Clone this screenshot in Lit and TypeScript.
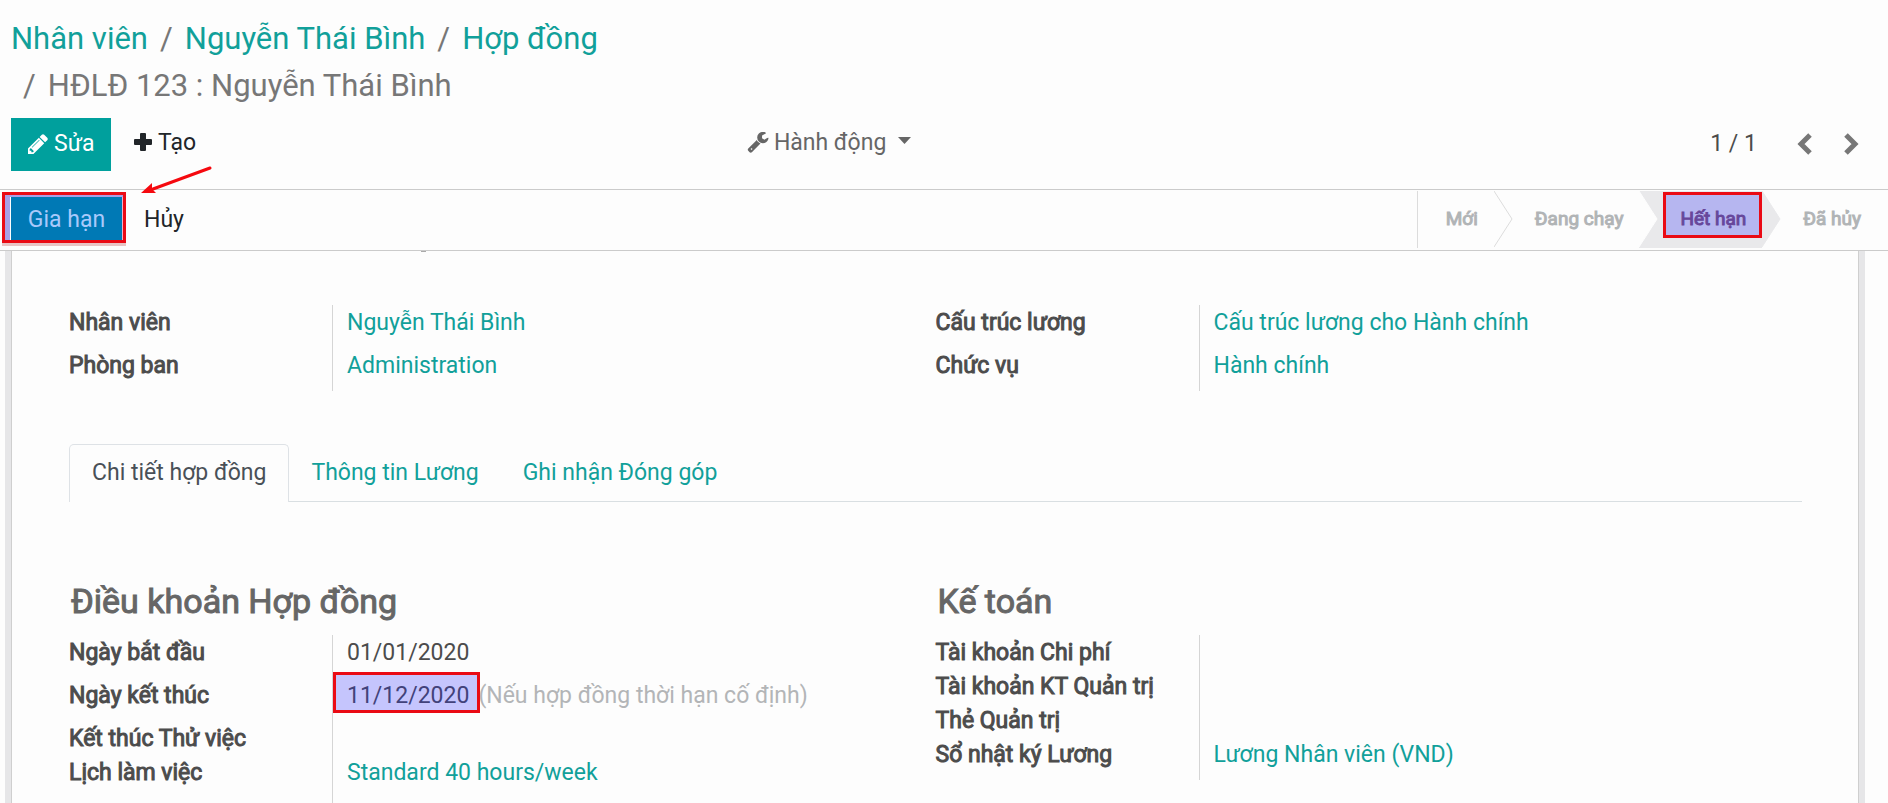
import { LitElement, html, css, nothing } from "lit";
import { customElement, property } from "lit/decorators.js";

type Field = { label: string; value?: string; link?: boolean; note?: string; marked?: boolean };

@customElement("field-group")
export class FieldGroup extends LitElement {
  @property({ attribute: false }) fields: Field[] = [];
  @property() heading = "";

  static styles = css`
    :host { display: flex; flex-direction: column; flex: 1 1 0; min-width: 0; }
    .heading {
      margin: 0 0 8px 2px; font-size: 34px; line-height: 52px; font-weight: 400;
      color: #666; -webkit-text-stroke: 1px #666;
    }
    .rows { margin: 0; }
    .row { display: flex; min-height: 34px; line-height: 32px; }
    .label { flex: 0 0 263px; padding-top: 2px; color: #4c4c4c; -webkit-text-stroke: 1px #4c4c4c; white-space: nowrap; }
    .value { flex: 1; margin: 0; padding: 2px 0 0 14px; border-left: 1px solid #d5d5d5; white-space: nowrap; }
    .filled { padding-bottom: 9px; }
    a { color: #11a09a; text-decoration: none; }
    .note { color: #b3b5b7; margin-left: 9px; }
    .date { position: relative; }
    .mark {
      position: absolute; left: -14px; right: -11px; top: -10px; bottom: -4px; box-sizing: border-box;
      border: 3px solid #ea0a14; background: rgba(40, 40, 255, 0.26);
    }
  `;

  render() {
    return html`
      ${this.heading ? html`<h2 class="heading">${this.heading}</h2>` : nothing}
      <dl class="rows">
        ${this.fields.map(
          (f) => html`<div class="row">
            <dt class="label">${f.label}</dt>
            <dd class="value ${f.value ? "filled" : ""}">${f.link
              ? html`<a href="#">${f.value}</a>`
              : html`<span class="date">${f.value ?? ""}${f.marked ? html`<i class="mark"></i>` : nothing}</span>`}${f.note
              ? html`<span class="note">${f.note}</span>`
              : nothing}</dd>
          </div>`
        )}
      </dl>
    `;
  }
}

@customElement("app-root")
export class AppRoot extends LitElement {
  static styles = css`
    :host {
      display: flex; flex-direction: column; height: 100vh; overflow: hidden; position: relative;
      background: #fdfdfd; color: #4c4c4c; font: 23px/34px Roboto, "Noto Sans", sans-serif;
    }
    * { box-sizing: border-box; }
    a { color: #11a09a; text-decoration: none; }
    button { font: inherit; border: 0; margin: 0; background: none; color: #212529; cursor: pointer; white-space: nowrap; }
    svg { display: block; flex: none; }
    .crumbs {
      display: flex; flex-wrap: wrap; list-style: none; margin: 0; padding: 15px 11px 0; width: 40%;
      font-size: 31px; line-height: 47px; color: #777;
    }
    .crumb + .crumb::before { content: "/"; padding: 0 12px; color: #777; }
    .tools { display: grid; grid-template-columns: 39.5% auto 1fr; align-items: start; padding: 9px 14px 18px 11px; }
    .left, .pager { display: flex; }
    .edit { background: #00a09d; color: #fff; width: 100px; height: 53px; display: flex; gap: 6px; padding: 9px 0 0 17px; }
    .edit svg { margin-top: 7px; }
    .create { display: flex; gap: 6px; padding: 8px 23px; }
    .create svg { margin-top: 7px; }
    .action { display: flex; gap: 5px; padding: 8px 0; color: #666; }
    .action svg { margin-top: 6px; }
    .action .caret { margin: 11px 0 0 7px; }
    .pager { justify-content: flex-end; padding-top: 9px; }
    .page { margin-right: 27px; }
    .step { padding: 4px 10px; }
    .status { display: flex; justify-content: space-between; height: 62px; border: solid #cbcbcb; border-width: 1px 0; position: relative; }
    .acts { display: flex; padding: 7px 0 0 11px; }
    .renew { background: #0079b5; color: #a9c9fb; height: 43px; width: 111px; padding: 2px 0 0; }
    .cancel { padding: 2px 22px 0; height: 43px; }
    .stages { display: flex; list-style: none; margin: 0; padding: 1px 0 2px; font-size: 19px; line-height: 56px; }
    .stage { position: relative; padding: 0 16px 0 41px; color: #b1b4b6; -webkit-text-stroke: 1px currentColor; white-space: nowrap; }
    .stage:first-child { padding-left: 28px; border-left: 1px solid #dcdcdc; }
    .stage:last-child { padding-right: 27px; }
    .current { background: #e9e9eb; color: #7e5378; }
    .point { position: absolute; left: 100%; top: 0; z-index: 1; }
    .mark { position: absolute; border: 3px solid #ea0a14; pointer-events: none; }
    .renewmark { left: 2px; top: 2px; width: 124px; height: 51px; box-shadow: inset 5px 0 #a9a0e6, inset 0 2px #a9a0e6, inset -1px 0 #f0b0c8, 0 3px #e8c4c4; }
    .stagemark { left: 24px; right: 0; top: 1px; height: 46px; background: rgba(40, 40, 255, 0.26); z-index: 2; }
    .arrow { position: absolute; left: 139px; top: 164px; z-index: 3; }
    .sheet { flex: 1; min-height: 0; overflow: hidden; margin: 0 23px 0 5px; padding: 54px 57px 0 58px; border: solid #e6e6e8; border-width: 0 6px; box-shadow: inset 1px 0 #cfcfcf, inset -1px 0 #cfcfcf; position: relative; }
    .tail { position: absolute; left: 410px; top: 0; width: 5px; height: 1px; background: #aaa; }
    .groups { display: flex; }
    .tabs { display: flex; margin: 53px 0 73px; border-bottom: 1px solid #d9dfe2; }
    .tab { padding: 12px 22px 0; height: 57px; color: #11a09a; }
    .active { color: #495057; border: 1px solid #dee2e6; border-bottom: 0; border-radius: 5px 5px 0 0; background: #fdfdfd; padding-top: 11px; height: 58px; margin-bottom: -1px; }
  `;

  private main: Field[] = [
    { label: "Nhân viên", value: "Nguyễn Thái Bình", link: true },
    { label: "Phòng ban", value: "Administration", link: true },
  ];
  private job: Field[] = [
    { label: "Cấu trúc lương", value: "Cấu trúc lương cho Hành chính", link: true },
    { label: "Chức vụ", value: "Hành chính", link: true },
  ];
  private terms: Field[] = [
    { label: "Ngày bắt đầu", value: "01/01/2020" },
    { label: "Ngày kết thúc", value: "11/12/2020", note: "(Nếu hợp đồng thời hạn cố định)", marked: true },
    { label: "Kết thúc Thử việc" },
    { label: "Lịch làm việc", value: "Standard 40 hours/week", link: true },
    { label: "" },
  ];
  private accounting: Field[] = [
    { label: "Tài khoản Chi phí" },
    { label: "Tài khoản KT Quản trị" },
    { label: "Thẻ Quản trị" },
    { label: "Sổ nhật ký Lương", value: "Lương Nhân viên (VND)", link: true },
  ];

  render() {
    return html`
      <ol class="crumbs">
        <li class="crumb"><a href="#">Nhân viên</a></li>
        <li class="crumb"><a href="#">Nguyễn Thái Bình</a></li>
        <li class="crumb"><a href="#">Hợp đồng</a></li>
        <li class="crumb">HĐLĐ 123 : Nguyễn Thái Bình</li>
      </ol>
      <div class="tools">
        <div class="left">
          <button class="edit">
            <svg width="20" height="20" viewBox="0 0 1536 1536" fill="#fff"><path d="M363 1408l91-91-235-235-91 91v107h128v128h107zM886 480q0-22-22-22-10 0-17 7l-542 542q-7 7-7 17 0 22 22 22 10 0 17-7l542-542q7-7 7-17zM832 288l416 416-832 832H0v-416zM1515 384q0 53-37 90l-166 166-416-416 166-165q36-38 90-38 53 0 91 38l235 234q37 39 37 91z"/></svg>
            Sửa
          </button>
          <button class="create">
            <svg width="18" height="18" viewBox="0 0 18 18" fill="#212529"><path d="M7 0h4q1 0 1 1v5h5q1 0 1 1v4q0 1-1 1h-5v5q0 1-1 1H7q-1 0-1-1v-5H1q-1 0-1-1V7q0-1 1-1h5V1q0-1 1-1z"/></svg>
            Tạo
          </button>
        </div>
        <button class="action">
          <svg width="22" height="21" viewBox="0 0 1664 1664" fill="#666"><path d="M384 1344q0-26-19-45t-45-19-45 19-19 45 19 45 45 19 45-19 19-45zM1028 916l-682 682q-37 37-90 37-52 0-91-37L59 1490q-38-36-38-90 0-53 38-91l681-681q39 98 114.500 173.500T1028 916zM1662 481q0 39-23 106-47 134-164.500 217.500T1216 888q-185 0-316.500-131.500T768 440t131.500-316.500T1216-8q58 0 121.500 16.500T1445 55q16 11 16 28t-16 28L1152 280v224l193 107q5-3 79-48.500t135.500-81T1630 446q15 0 23.500 10t8.500 25z"/></svg>
          Hành động
          <svg class="caret" width="13" height="7" viewBox="0 0 13 7" fill="#666"><path d="M0 0h13L6.500 7z"/></svg>
        </button>
        <div class="pager">
          <span class="page">1 / 1</span>
          <button class="step" aria-label="Trước"><svg width="25" height="22" viewBox="0 0 25 22" fill="none" stroke="#777" stroke-width="5"><path d="M16 2L7 11l9 9"/></svg></button>
          <button class="step" aria-label="Sau"><svg width="25" height="22" viewBox="0 0 25 22" fill="none" stroke="#777" stroke-width="5"><path d="M7 2l9 9-9 9"/></svg></button>
        </div>
      </div>
      <div class="status">
        <div class="acts">
          <button class="renew">Gia hạn</button>
          <button class="cancel">Hủy</button>
        </div>
        <i class="mark renewmark"></i>
        <ol class="stages">
          <li class="stage">Mới${this.point("#fdfdfd", "#dcdcdc")}</li>
          <li class="stage">Đang chạy${this.point("#fdfdfd", "#fdfdfd")}</li>
          <li class="stage current">Hết hạn${this.point("#e9e9eb", "#e9e9eb")}<i class="mark stagemark"></i></li>
          <li class="stage">Đã hủy</li>
        </ol>
      </div>
      <svg class="arrow" width="76" height="34" viewBox="0 0 76 34"><path d="M71 4L14 25" stroke="#f5090f" stroke-width="3" stroke-linecap="round"/><path d="M2 29l11-10 0 6 4 4z" fill="#f5090f"/></svg>
      <main class="sheet">
        <i class="tail"></i>
        <div class="groups">
          <field-group .fields=${this.main}></field-group>
          <field-group .fields=${this.job}></field-group>
        </div>
        <nav class="tabs">
          <a class="tab active" href="#">Chi tiết hợp đồng</a>
          <a class="tab" href="#">Thông tin Lương</a>
          <a class="tab" href="#">Ghi nhận Đóng góp</a>
        </nav>
        <div class="groups">
          <field-group heading="Điều khoản Hợp đồng" .fields=${this.terms}></field-group>
          <field-group heading="Kế toán" .fields=${this.accounting}></field-group>
        </div>
      </main>
    `;
  }

  private point(fill: string, line: string) {
    return html`<svg class="point" width="19" height="56" viewBox="0 0 19 56"><path d="M0 0L18 28 0 56" fill=${fill} stroke=${line}/></svg>`;
  }
}
